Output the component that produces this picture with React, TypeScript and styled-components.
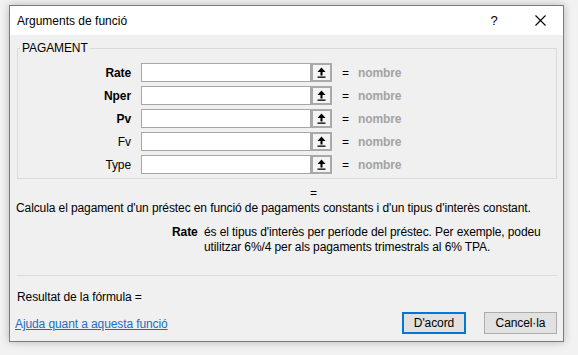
import React from "react";
import styled, { createGlobalStyle } from "styled-components";

const Global = createGlobalStyle`
  html, body { margin: 0; padding: 0; }
  body {
    background: #f2f2f2;
    font-family: "Liberation Sans", Arial, sans-serif;
    font-size: 12px;
    color: #000;
    width: 578px;
    height: 355px;
    overflow: hidden;
  }
`;

const Page = styled.div`
  padding: 5px 0 0 9px;
`;

const Window = styled.div`
  width: 555px;
  height: 337px;
  box-sizing: border-box;
  border: 1px solid #7c7c7c;
  background: #f0f0f0;
  box-shadow: 0 0 8px rgba(0, 0, 0, 0.25);
  display: flex;
  flex-direction: column;
`;

const TitleBar = styled.div`
  height: 29px;
  background: #fff;
  display: flex;
  align-items: center;
  padding-left: 7px;
`;

const Title = styled.div`
  flex: 1;
  font-size: 12px;
  padding-top: 1px;
`;

const TitleButton = styled.div<{ $w: number }>`
  width: ${(p) => p.$w}px;
  height: 29px;
  display: flex;
  align-items: center;
  justify-content: center;
  font-size: 13px;
`;

const Body = styled.div`
  flex: 1;
  display: flex;
  flex-direction: column;
  padding: 0 6px 0 7px;
  letter-spacing: -0.1px;
`;

const Group = styled.fieldset`
  margin: 6px 0 0 0;
  padding: 8px 0 4px 0;
  border: 1px solid #dadada;
  min-width: 0;
`;

const Legend = styled.legend`
  margin-left: 2px;
  padding: 0 2px;
  font-size: 12px;
  line-height: 14px;
`;

const Rows = styled.div`
  display: grid;
  grid-template-columns: 123px 170px 21px auto;
  row-gap: 4px;
  align-items: center;
`;

const Label = styled.div<{ $bold?: boolean }>`
  text-align: right;
  padding-right: 10px;
  font-weight: ${(p) => (p.$bold ? 700 : 400)};
`;

const Input = styled.div`
  height: 19px;
  box-sizing: border-box;
  border: 1px solid #a6a6a6;
  background: #fff;
`;

const Collapse = styled.div`
  height: 19px;
  box-sizing: border-box;
  border: 2px solid #a9a9a9;
  background: #f4f4f4;
  display: flex;
  align-items: center;
  justify-content: center;
`;

const Value = styled.div`
  display: flex;
  align-items: center;
  gap: 9px;
  padding-left: 10px;
  color: #a3a3a3;
`;

const Eq = styled.span`
  color: #000;
`;

const Muted = styled.span`
  font-weight: 600;
`;

const ResultEq = styled.div`
  margin: 7px 0 0 293px;
  line-height: 14px;
`;

const Desc = styled.div`
  margin: 0 0 0 -1px;
  line-height: 16px;
`;

const ArgHelp = styled.div`
  display: flex;
  margin: 9px 0 0 155px;
  line-height: 15px;
`;

const ArgName = styled.div`
  font-weight: 700;
  width: 32px;
`;

const ArgText = styled.div`
  width: 350px;
`;

const Separator = styled.div`
  height: 1px;
  background: #dcdcdc;
  margin-top: 20px;
`;

const Result = styled.div`
  margin-top: 13px;
  line-height: 16px;
`;

const Footer = styled.div`
  display: flex;
  align-items: center;
  margin-top: 7px;
`;

const HelpLink = styled.a`
  flex: 1;
  color: #1a6fc4;
  text-decoration: underline;
  margin-left: -2px;
  padding-top: 2px;
`;

const Button = styled.button<{ $primary?: boolean }>`
  height: 22px;
  box-sizing: border-box;
  width: ${(p) => (p.$primary ? 64 : 73)}px;
  margin-left: ${(p) => (p.$primary ? 0 : 18)}px;
  background: #e1e1e1;
  border: ${(p) => (p.$primary ? "2px solid #0078d7" : "1px solid #adadad")};
  font-family: inherit;
  font-size: 12px;
  letter-spacing: -0.1px;
  color: #000;
  padding: 0;
`;

const RefIcon = () => (
  <svg width="9" height="11" viewBox="0 0 9 11">
    <path d="M4.5 0.5 L8.5 5 L5.5 5 L5.5 8.5 L3.5 8.5 L3.5 5 L0.5 5 Z" fill="#000" />
    <rect x="0.5" y="9.5" width="8" height="1.3" fill="#000" />
  </svg>
);

const CloseIcon = () => (
  <svg width="11" height="11" viewBox="0 0 11 11">
    <path d="M0.5 0.5 L10.5 10.5 M10.5 0.5 L0.5 10.5" stroke="#000" strokeWidth="1.1" />
  </svg>
);

const args = [
  { name: "Rate", bold: true },
  { name: "Nper", bold: true },
  { name: "Pv", bold: true },
  { name: "Fv", bold: false },
  { name: "Type", bold: false },
];

export default function App() {
  return (
    <>
      <Global />
      <Page>
        <Window>
          <TitleBar>
            <Title>Arguments de funció</Title>
            <TitleButton $w={46}>?</TitleButton>
            <TitleButton $w={46}>
              <CloseIcon />
            </TitleButton>
          </TitleBar>
          <Body>
            <Group>
              <Legend>PAGAMENT</Legend>
              <Rows>
                {args.map((a) => (
                  <React.Fragment key={a.name}>
                    <Label $bold={a.bold}>{a.name}</Label>
                    <Input />
                    <Collapse>
                      <RefIcon />
                    </Collapse>
                    <Value>
                      <Eq>=</Eq>
                      <Muted>nombre</Muted>
                    </Value>
                  </React.Fragment>
                ))}
              </Rows>
            </Group>
            <ResultEq>=</ResultEq>
            <Desc>
              Calcula el pagament d'un préstec en funció de pagaments constants i d'un tipus d'interès constant.
            </Desc>
            <ArgHelp>
              <ArgName>Rate</ArgName>
              <ArgText>
                és el tipus d'interès per període del préstec. Per exemple, podeu utilitzar 6%/4 per als pagaments
                trimestrals al 6% TPA.
              </ArgText>
            </ArgHelp>
            <Separator />
            <Result>Resultat de la fórmula =</Result>
            <Footer>
              <HelpLink href="#">Ajuda quant a aquesta funció</HelpLink>
              <Button $primary>D'acord</Button>
              <Button>Cancel·la</Button>
            </Footer>
          </Body>
        </Window>
      </Page>
    </>
  );
}
